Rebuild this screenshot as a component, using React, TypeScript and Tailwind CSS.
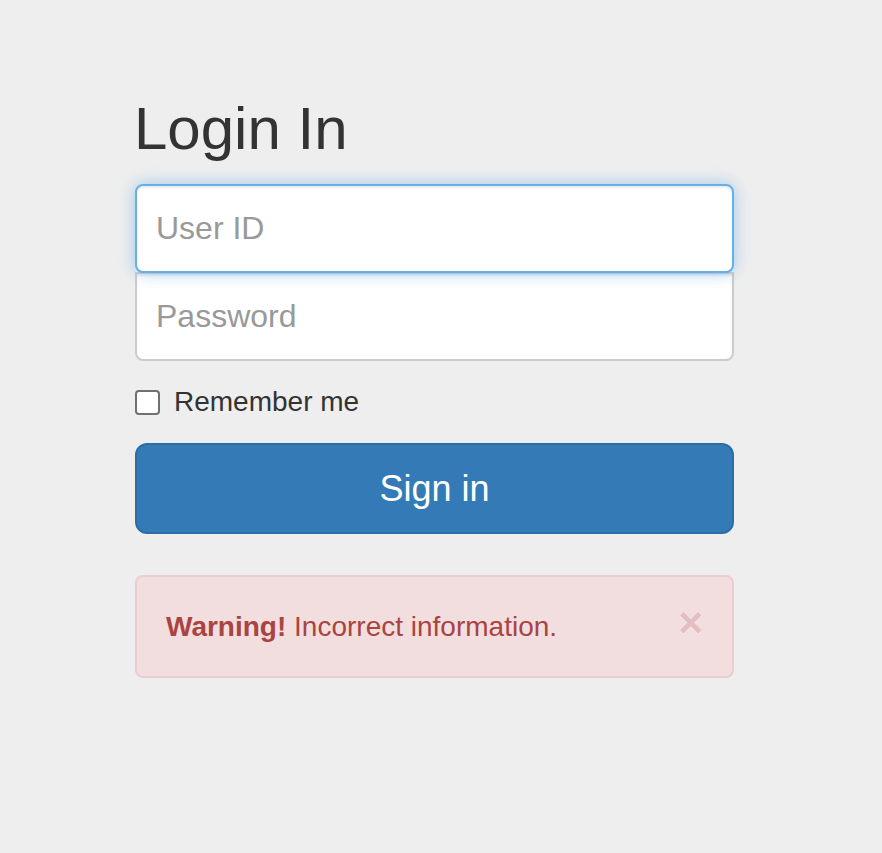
import React, { useState } from 'react';

export default function App() {
  const [remember, setRemember] = useState(false);
  const [showAlert, setShowAlert] = useState(true);

  return (
    <div className="min-h-screen bg-[#eeeeee] font-['Liberation_Sans',Arial,sans-serif] text-[#333333]">
      <form className="ml-[135px] w-[599px] pt-[96px]" onSubmit={(e) => e.preventDefault()}>
        {/* Heading */}
        <h2 className="-ml-px text-[60px] leading-[66px] font-normal">Login In</h2>

        {/* Credentials */}
        <input
          type="text"
          placeholder="User ID"
          className="relative z-10 mt-[22px] block h-[89px] w-full rounded-[8px] border-2 border-[#66afe9] bg-white px-[19px] text-[32px] text-[#555555] placeholder:text-[#999999] outline-none shadow-[inset_0_2px_2px_rgba(0,0,0,0.075),0_0_16px_rgba(102,175,233,0.6)]"
        />
        <input
          type="password"
          placeholder="Password"
          className="-mt-px block h-[89px] w-full rounded-b-[8px] border-2 border-[#cccccc] bg-white px-[19px] text-[32px] text-[#555555] placeholder:text-[#999999] outline-none shadow-[inset_0_2px_2px_rgba(0,0,0,0.075)]"
        />

        {/* Remember me */}
        <label className="mt-[21px] flex h-[40px] items-center text-[28px] leading-none cursor-pointer">
          <input
            type="checkbox"
            checked={remember}
            onChange={(e) => setRemember(e.target.checked)}
            className="h-[25px] w-[25px] appearance-none rounded-[4px] border-2 border-[#707070] bg-white checked:bg-[#337ab7]"
          />
          <span className="ml-[14px]">Remember me</span>
        </label>

        {/* Submit */}
        <button
          type="submit"
          className="mt-[21px] block h-[91px] w-full rounded-[12px] border-2 border-[#2e6da4] bg-[#337ab7] text-[36px] text-white hover:bg-[#286090]"
        >
          Sign in
        </button>

        {/* Alert */}
        {showAlert && (
          <div className="mt-[41px] flex h-[103px] items-center rounded-[8px] border-2 border-[#ebccd1] bg-[#f2dede] pl-[29px] pr-[29px] text-[28px] text-[#a94442]">
            <span>
              <strong className="font-bold">Warning!</strong> Incorrect information.
            </span>
            <button
              type="button"
              onClick={() => setShowAlert(false)}
              className="ml-auto -mt-[8px] text-[42px] font-bold leading-none text-[#a94442] opacity-20 [text-shadow:0_2px_0_#fff]"
            >
              ×
            </button>
          </div>
        )}
      </form>
    </div>
  );
}
